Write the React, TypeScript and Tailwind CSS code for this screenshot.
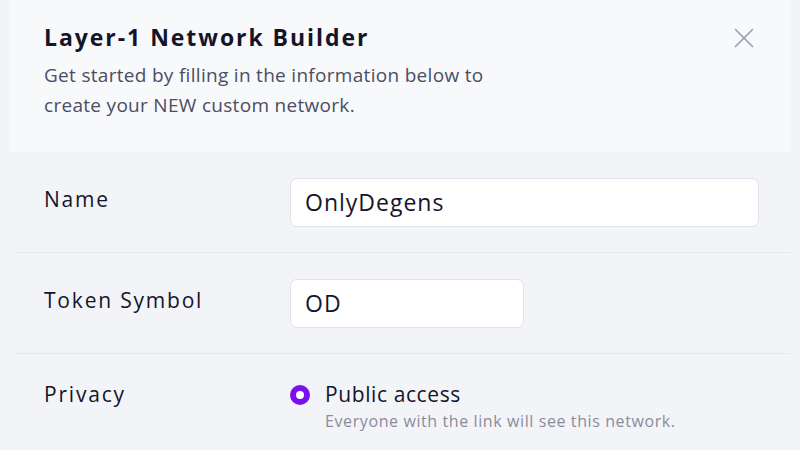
import React from 'react';

function CloseIcon() {
  return (
    <svg width="20" height="20" viewBox="0 0 20 20" fill="none" className="text-[#9a9bab]">
      <path d="M1.5 1.5 L18.5 18.5 M18.5 1.5 L1.5 18.5" stroke="currentColor" strokeWidth="1.6" strokeLinecap="round" />
    </svg>
  );
}

const labelCls = 'w-[246px] shrink-0 text-[21px] leading-[28px] font-medium tracking-[1.8px] text-[#15152a]';
const inputCls =
  'h-[49px] rounded-[7px] border border-[#e1e2ea] bg-white px-[14px] text-[23px] tracking-[1px] text-[#15152a] outline-none';

function Row({ label, children }: { label: string; children: React.ReactNode }) {
  return (
    <div className="flex items-center h-[101px] pl-[30px] pr-[31px] border-b border-[#e6e7ee]">
      <div className={`${labelCls} -mt-[6px]`}>{label}</div>
      <div className="flex-1">{children}</div>
    </div>
  );
}

export default function App() {
  return (
    <div
      className="w-full h-[450px] overflow-hidden bg-[#f3f4f8]"
      style={{ fontFamily: '"Open Sans", "Noto Sans", sans-serif' }}
    >
      {/* header */}
      <div className="mx-[10px] h-[152px] bg-[#f8f9fb] pl-[34px] pr-[36px] pt-[20px] flex justify-between">
        <div>
          <h1 className="text-[23px] leading-[34px] font-bold tracking-[1.95px] text-[#15152a]">Layer-1 Network Builder</h1>
          <p className="mt-[6px] text-[19px] leading-[30px] tracking-[0.3px] text-[#4b4d63]">
            Get started by filling in the information below to
            <br />
            create your NEW custom network.
          </p>
        </div>
        <div className="pt-[8px]">
          <CloseIcon />
        </div>
      </div>

      {/* form */}
      <div className="ml-[14px] mr-[10px]">
        <Row label="Name">
          <input readOnly value="OnlyDegens" className={`w-[469px] ${inputCls}`} />
        </Row>
        <Row label="Token Symbol">
          <input readOnly value="OD" className={`w-[234px] ${inputCls}`} />
        </Row>
        <div className="flex items-start pl-[30px] pr-[31px] pt-[26px]">
          <div className={labelCls}>Privacy</div>
          <div className="flex items-start gap-[15px] -mt-[2px]">
            <div className="mt-[7px] w-[20px] h-[20px] rounded-full bg-[#7a0ff0] flex items-center justify-center">
              <div className="w-[8px] h-[8px] rounded-full bg-white" />
            </div>
            <div>
              <div className="text-[21px] leading-[32px] font-medium tracking-[0.6px] text-[#15152a]">Public access</div>
              <div className="text-[16px] leading-[23px] tracking-[0.6px] text-[#8a8c9c]">
                Everyone with the link will see this network.
              </div>
            </div>
          </div>
        </div>
      </div>
    </div>
  );
}
